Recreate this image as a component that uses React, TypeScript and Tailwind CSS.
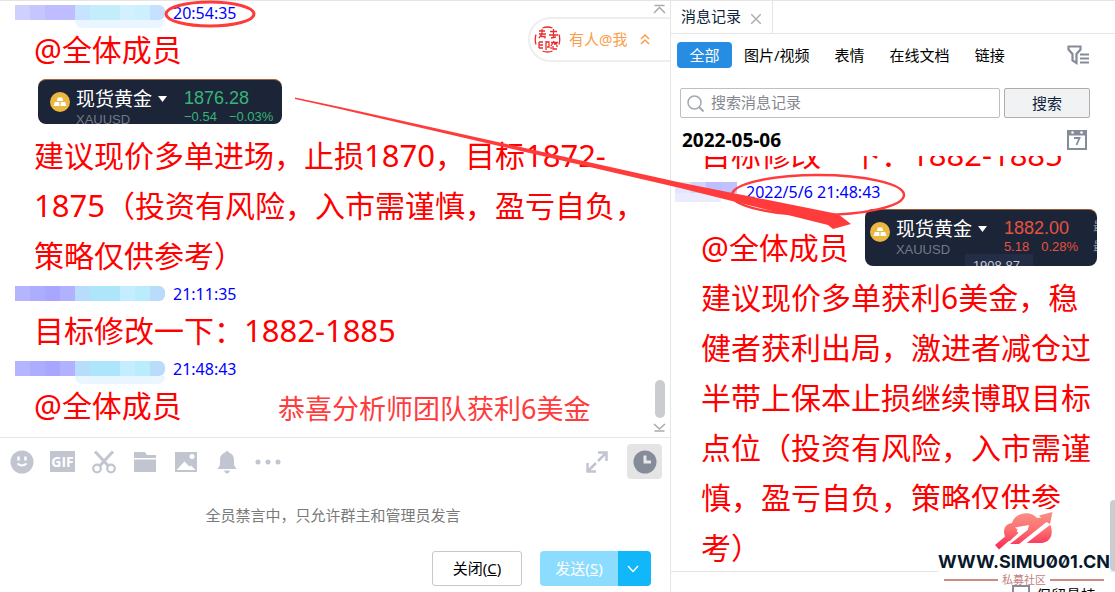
import React from "react";

function Coin() {
  return (
    <svg width="20" height="20" viewBox="0 0 20 20" className="shrink-0" aria-hidden="true">
      <circle cx="10" cy="10" r="10" fill="#ecb740" />
      <path d="M7.800 5.500h4.400l1 3.500H6.800zM4.800 10h4.400l.4 4H3.600zM10.800 10h4.400l1.200 4h-6z" fill="#fff" />
    </svg>
  );
}

type QuoteProps = { price: string; change: string; percent: string; wide?: boolean };

function Quote({ price, change, percent, wide }: QuoteProps) {
  return (
    <div
      className={
        wide
          ? "relative flex h-[57px] w-[232px] shrink-0 gap-[6px] overflow-hidden rounded-lg border-t border-[#9a5a35] bg-[#1c2437] pt-[6px] pl-[5px]"
          : "relative flex h-[45px] w-[244px] shrink-0 gap-[6px] overflow-hidden rounded-lg border-t border-[#b0622e] bg-[#1c2437] pt-[6px] pl-3"
      }
    >
      <div className="pt-[6px]">
        <Coin />
      </div>
      <div className="w-[102px]">
        <div className="flex items-center gap-[6px] text-[19px] leading-[26px] text-white">
          现货黄金
          <svg width="9" height="6" viewBox="0 0 9 6" aria-hidden="true">
            <path d="M0 0h9L4.500 6z" fill="#fff" />
          </svg>
        </div>
        <div className="font-['Liberation_Sans'] text-[13px] leading-4 text-[#727a88]">XAUUSD</div>
      </div>
      <div className={wide ? "font-['Liberation_Sans'] text-[#e5533f]" : "font-['Liberation_Sans'] text-[#35b579]"}>
        <div className="text-[18px] leading-6">{price}</div>
        <div className="flex gap-3 text-[13px] leading-[13px] whitespace-nowrap">
          <span>{change}</span>
          <span>{percent}</span>
        </div>
      </div>
      {wide && (
        <>
          <div className="absolute top-[44px] left-[100px] h-5 w-[68px] bg-[#232d45] pl-2 font-['Liberation_Sans'] text-[13px] leading-[24px] text-[#c3c8d2]">
            1908.87
          </div>
          <div className="absolute top-[7px] left-[228px] text-[12px] leading-[20px] whitespace-nowrap text-[#8d94a3]">
            最高
            <br />
            最低
          </div>
        </>
      )}
    </div>
  );
}

const mosaic = [
  "h-full flex-1 bg-[#b4b4ff]",
  "h-full flex-1 bg-[#adadff]",
  "h-full flex-1 bg-[#a7a7ff]",
  "h-full flex-1 bg-[#b1b1ff]",
  "h-full flex-1 bg-[#b8dcfb]",
  "h-full flex-1 bg-[#ade6fa]",
  "h-full flex-1 bg-[#ade6fa]",
  "h-full flex-1 bg-[#c4edff]",
  "h-full flex-1 bg-[#b9edfb]",
  "h-full flex-1 bg-[#b9dcfb]",
];

const paleMosaic = [
  "h-full flex-1 bg-[#d0d0ff]",
  "h-full flex-1 bg-[#c6c6ff]",
  "h-full flex-1 bg-[#bfbcff]",
  "h-full flex-1 bg-[#bfbcff]",
  "h-full flex-1 bg-[#c6e4ff]",
  "h-full flex-1 bg-[#c4edfb]",
  "h-full flex-1 bg-[#c4edfb]",
  "h-full flex-1 bg-[#d2f0ff]",
  "h-full flex-1 bg-[#cdf0ff]",
  "h-full flex-1 bg-[#c6e0ff]",
];

function Sender({ time, pale, soft }: { time: string; pale?: boolean; soft?: boolean }) {
  return (
    <div className="flex h-[25px] items-center gap-2 pl-[15px] text-[16px] text-[#0000ff]">
      <div className="w-[150px]">
        <div className="flex h-[15px] overflow-hidden rounded-r-md">
          {(pale ? paleMosaic : mosaic).map((c, i) => (
            <span key={i} className={c} />
          ))}
        </div>
        {soft && <div className="-mb-2 ml-[60px] h-2 rounded-b-lg bg-[#e9f6ff]" />}
      </div>
      <span>{time}</span>
    </div>
  );
}

function Num({ children }: { children: React.ReactNode }) {
  return <span className="text-[31px] leading-none">{children}</span>;
}

function Toolbar() {
  const btn = "flex h-8 w-[41px] items-center justify-center";
  return (
    <div className="flex items-center pt-[6px] pr-2 pl-px text-[#c1c5cf]">
      <button className={btn} aria-label="表情">
        <svg width="24" height="24" viewBox="0 0 24 24">
          <circle cx="12" cy="12" r="11.500" fill="currentColor" />
          <path d="M8.500 6.500v4M15.500 6.500v4" stroke="#fff" strokeWidth="2.500" />
          <path d="M7.500 13.500q4.500 4 9 0" stroke="#fff" strokeWidth="2" fill="none" />
        </svg>
      </button>
      <button className={btn} aria-label="动图">
        <span className="flex h-[21px] w-[25px] items-center justify-center bg-[#c1c5cf] font-['Open_Sans'] text-[14px] font-bold text-white">GIF</span>
      </button>
      <button className={btn} aria-label="截图">
        <svg width="24" height="24" viewBox="0 0 24 24" fill="none" stroke="currentColor">
          <circle cx="5" cy="18.500" r="3.800" strokeWidth="2.200" />
          <circle cx="19" cy="18.500" r="3.800" strokeWidth="2.200" />
          <path d="M3 1.500L16 15.500M21 1.500L8 15.500" strokeWidth="3" />
        </svg>
      </button>
      <button className={btn} aria-label="文件">
        <svg width="24" height="24" viewBox="0 0 24 24" fill="currentColor">
          <path d="M1 2h11l2 3h9v3H1zM1 9.500h22V22H1z" />
        </svg>
      </button>
      <button className={btn} aria-label="图片">
        <svg width="24" height="24" viewBox="0 0 24 24">
          <path d="M1 2h22v20H1z" fill="currentColor" />
          <path d="M2.500 20l8-8.500 5 5 1.500-1 4.500 4.500z" fill="#fff" />
          <circle cx="18" cy="6.500" r="2.500" fill="#fff" />
        </svg>
      </button>
      <button className={btn} aria-label="提醒">
        <svg width="24" height="24" viewBox="0 0 24 24" fill="currentColor">
          <path d="M12 .5l2 2c4 1.500 5 4.500 5 7.500v5l2.500 4h-19L5 15v-5c0-3 1-6 5-7.500zM9 20.500h6q-1 3-3 3t-3-3z" />
        </svg>
      </button>
      <button className={btn} aria-label="更多">
        <svg width="26" height="6" viewBox="0 0 26 6" fill="currentColor">
          <circle cx="3" cy="3" r="2.500" />
          <circle cx="13" cy="3" r="2.500" />
          <circle cx="23" cy="3" r="2.500" />
        </svg>
      </button>
      <button className="ml-auto" aria-label="展开">
        <svg width="22" height="22" viewBox="0 0 22 22" fill="none" stroke="currentColor" strokeWidth="2.500">
          <path d="M12 1.500h8.500V10M20 2l-8 8M1.500 12v8.500H10M2 20l8-8" />
        </svg>
      </button>
      <button className="ml-[19px] flex h-[35px] w-[35px] items-center justify-center rounded-sm bg-[#e4e4e4]" aria-label="消息记录">
        <svg width="24" height="24" viewBox="0 0 24 24">
          <circle cx="12" cy="12" r="11.500" fill="#858b99" />
          <path d="M12 5.500V12h6" stroke="#e8e8e8" strokeWidth="3" fill="none" />
        </svg>
      </button>
    </div>
  );
}

function Chat() {
  const big = "pl-[34px] text-[30px] leading-[50px] text-[#ff0000] whitespace-nowrap";
  return (
    <section className="flex min-h-0 min-w-0 flex-col">
      <div className="relative min-h-0 flex-1 overflow-hidden">
        <Sender time="20:54:35" pale soft />
        <p className={big}>
          <Num>@</Num>全体成员
        </p>
        <div className="pt-1 pb-[7px] pl-[38px]">
          <Quote price="1876.28" change="−0.54" percent="−0.03%" />
        </div>
        <p className={big}>
          建议现价多单进场，止损<Num>1870</Num>，目标<Num>1872-</Num>
          <br />
          <Num>1875</Num>（投资有风险，入市需谨慎，盈亏自负，
          <br />
          策略仅供参考）
        </p>
        <Sender time="21:11:35" />
        <p className={big}>
          目标修改一下：<Num>1882-1885</Num>
        </p>
        <Sender time="21:48:43" soft />
        <p className={big}>
          <Num>@</Num>全体成员
        </p>
        <p className="absolute bottom-2 left-[278px] text-[27px] leading-10 text-[#ff3b3b]">恭喜分析师团队获利6美金</p>
        <button className="absolute top-[17px] right-0 flex h-[45px] w-[142px] items-center gap-2 rounded-l-full border-2 border-r-0 border-[#eeeeee] bg-white pl-1 text-[15px] text-[#fb9d4b]">
          <svg width="27" height="27" viewBox="0 0 27 27" fill="none" stroke="#ea2c2c" strokeWidth="1.300" aria-hidden="true">
            <path d="M8.500 2q5-2 10 0M25 8.500q1.500 5 0 10M8.500 25q5 2 10 0M2 8.500q-1.500 5 0 10" />
            <path d="M5 5h6M5 8h7M8 3v5l-3 4M7 10.500h4v2M16 5.500h7M15 9h9M19.500 3v9.500M17 12l5-1M5 16v6M5 16h4M5 19h4M5 22h4M12 16h3v5h-2M12 15v9M17 16.500h7M20 15l-3 5M20 18h3M17 21v2M19 20v3h4M23 19v2" />
          </svg>
          <span className="pr-1">有人@我</span>
          <svg width="10" height="11" viewBox="0 0 10 11" fill="none" stroke="currentColor" strokeWidth="1.500" aria-hidden="true">
            <path d="M1 5l4-4 4 4M1 10l4-4 4 4" />
          </svg>
        </button>
        <svg className="absolute top-1 right-1 bg-white" width="13" height="10" viewBox="0 0 13 10" fill="none" stroke="#aaaaaa" strokeWidth="1.500" aria-hidden="true">
          <path d="M1.500 1.500h10M1 9l5.500-5.500L12 9" />
        </svg>
        <div className="absolute right-[5px] bottom-[19px] h-[38px] w-[10px] rounded-full bg-[#cbccd0]" />
        <svg className="absolute right-1 bottom-[5px]" width="13" height="9" viewBox="0 0 13 9" fill="none" stroke="#aaaaaa" strokeWidth="1.500" aria-hidden="true">
          <path d="M1 1l5.500 5L12 1M1.500 8h10" />
        </svg>
      </div>
      <div className="border-t border-[#e5e5e5] pb-[6px]">
        <Toolbar />
        <p className="pt-6 pr-1 text-center text-[15px] leading-6 text-[#7a7a7a]">全员禁言中，只允许群主和管理员发言</p>
        <div className="flex justify-end gap-[18px] pt-6 pr-[19px] text-[15px]">
          <button className="h-[35px] w-[90px] rounded-[3px] border border-[#c8c8c8] bg-white text-black">
            关闭(<u>C</u>)
          </button>
          <div className="flex overflow-hidden rounded-sm text-white">
            <button className="h-[35px] w-[78px] bg-[#8bdcff]">
              发送(<u>S</u>)
            </button>
            <button className="flex w-[33px] items-center justify-center bg-[#12b7f9] pr-1" aria-label="发送选项">
              <svg width="12" height="8" viewBox="0 0 12 8" fill="none" stroke="#fff" strokeWidth="1.300">
                <path d="M1 1l5 5.500L11 1" />
              </svg>
            </button>
          </div>
        </div>
      </div>
    </section>
  );
}

function Watermark() {
  return (
    <div className="absolute right-[5px] bottom-[7px] flex w-[172px] flex-col items-center bg-white pt-[2px]">
      <svg width="60" height="39" viewBox="0 0 60 39" aria-hidden="true">
        <defs>
          <linearGradient id="cloud" gradientUnits="userSpaceOnUse" x1="0" y1="2" x2="0" y2="36">
            <stop offset="0" stopColor="#f98f84" />
            <stop offset="0.500" stopColor="#fb6f70" />
            <stop offset="1" stopColor="#fd2f58" />
          </linearGradient>
        </defs>
        <path d="M13 28C8 23 9 13 18 12C21 1 37 -1 43 7C50 6 55 9 56 13C60 22 57 31 48 32H18z" fill="url(#cloud)" />
        <path d="M26 34L57 10" stroke="#fff" strokeWidth="5" />
        <path d="M13 36L30 20" stroke="#fff" strokeWidth="5" />
        <path d="M35 14L21 16.500L32 26z" fill="#fff" />
        <path d="M1 34L21 17L25 21L5 38.500z" fill="url(#cloud)" />
        <path d="M24 18.500L28 22.500" stroke="#fff" strokeWidth="4" />
        <path d="M16 33L48 7.500L45 4.500L58.500 1L56 13L52.500 11L25 33z" fill="url(#cloud)" />
      </svg>
      <div className="font-['Inter'] text-[18px] leading-6 font-bold whitespace-nowrap text-[#08192b] slashed-zero">WWW.SIMU001.CN</div>
      <div className="flex w-[160px] items-center gap-1 font-['Noto_Sans_CJK_SC'] text-[11px] leading-[11px] text-[#c5807c]">
        <span className="h-[2px] flex-1 bg-[#cf8a86]" />
        私募社区
        <span className="h-[2px] flex-1 bg-[#cf8a86]" />
      </div>
    </div>
  );
}

function History() {
  const big = "pl-[30px] text-[30px] leading-[50px] text-[#ff0000] whitespace-nowrap";
  return (
    <aside className="relative flex min-h-0 min-w-0 flex-col border-l border-[#e5e5e5]">
      <div className="flex h-[34px] shrink-0 border-b border-[#e5e5e5] text-[15px] text-[#10233b]">
        <div className="flex items-center gap-[10px] border-r border-[#e5e5e5] pr-[11px] pl-[10px]">
          消息记录
          <button className="pt-1" aria-label="关闭标签">
            <svg width="10" height="10" viewBox="0 0 10 10" stroke="#b0b0b0" strokeWidth="1.500">
              <path d="M0 0l10 10M10 0L0 10" />
            </svg>
          </button>
        </div>
      </div>
      <nav className="flex shrink-0 items-center gap-[25px] pt-2 pr-[25px] pl-[6px] text-[15px] text-black">
        <button className="-mr-[13px] h-[26px] w-[55px] rounded-sm bg-[#268de2] text-white">全部</button>
        <button>图片/视频</button>
        <button>表情</button>
        <button>在线文档</button>
        <button>链接</button>
        <button className="ml-auto" aria-label="筛选">
          <svg width="23" height="20" viewBox="0 0 23 20" fill="none" stroke="#858b99" strokeWidth="2.200">
            <path d="M1.500 1.500h12v3L9.500 9v9l-4-2.500V9l-4-4.500z" />
            <path d="M13 9.500h9M13 13.500h9M13 17.500h9" strokeWidth="2" />
          </svg>
        </button>
      </nav>
      <form className="flex shrink-0 gap-1 pt-5 pr-[25px] pl-[9px] text-[15px]" onSubmit={(e) => e.preventDefault()}>
        <label className="flex h-[30px] min-w-0 flex-1 items-center gap-[7px] rounded-[2px] border border-[#bfbfbf] px-[6px]">
          <svg width="17" height="17" viewBox="0 0 17 17" fill="none" stroke="#a5a8ae" strokeWidth="1.500" aria-hidden="true">
            <circle cx="7.500" cy="7.500" r="6.500" />
            <path d="M12 12l4.500 4.500" strokeWidth="2" />
          </svg>
          <input className="min-w-0 flex-1 bg-transparent pb-[2px] outline-none placeholder:text-[#85888e]" placeholder="搜索消息记录" aria-label="搜索消息记录" />
        </label>
        <button className="w-[86px] rounded-[2px] border border-[#adadad] bg-[#f1f2f4] text-[#10233b]">搜索</button>
      </form>
      <div className="flex h-[38px] shrink-0 items-center justify-between pt-[6px] pr-7 pl-[11px] text-[19px] font-bold text-black">
        2022-05-06
        <button aria-label="选择日期">
          <svg width="20" height="20" viewBox="0 0 20 20">
            <path d="M0 0h20v20H0z" fill="#858b99" />
            <path d="M2 5.500h16V18H2z" fill="#fff" />
            <circle cx="5.500" cy="2.500" r="1.300" fill="#fff" />
            <circle cx="14.500" cy="2.500" r="1.300" fill="#fff" />
            <path d="M7 8h5.500l-3 7" stroke="#858b99" strokeWidth="1.800" fill="none" />
          </svg>
        </button>
      </div>
      <div className="min-h-0 flex-1 overflow-hidden">
        <p className={"-mt-[26px] " + big}>
          目标修改一下：<Num>1882-1885</Num>
        </p>
        <div className="flex h-6 items-center gap-[9px] pl-1 text-[16px] text-[#0000ff]">
          <div className="w-[62px]">
            <div className="flex h-[11px]">
              <span className="flex-1 bg-[#e4e4ff]" />
              <span className="flex-1 bg-[#d2d2ff]" />
              <span className="flex-1 bg-[#bebeff]" />
              <span className="flex-1 bg-[#c1c1ff]" />
            </div>
            <div className="h-[9px] w-[46px] bg-[#ebebff]" />
          </div>
          2022/5/6 21:48:43
        </div>
        <div className={"flex h-[69px] items-start gap-4 pt-[5px] " + big}>
          <span className="pt-[14px]">
            <Num>@</Num>全体成员
          </span>
          <Quote price="1882.00" change="5.18" percent="0.28%" wide />
        </div>
        <p className={big}>
          建议现价多单获利6美金，稳
          <br />
          健者获利出局，激进者减仓过
          <br />
          半带上保本止损继续博取目标
          <br />
          点位（投资有风险，入市需谨
          <br />
          慎，盈亏自负，策略仅供参
          <br />
          考）
        </p>
      </div>
      <label className="flex h-[21px] shrink-0 items-start justify-end gap-[6px] overflow-hidden border-t border-[#e5e5e5] pt-[13px] pr-[19px] text-[15px] leading-5 text-black">
        <input type="checkbox" className="h-[18px] w-[18px] appearance-none border-2 border-[#858b99]" />
        保留悬挂
      </label>
      <div className="absolute right-0 bottom-[21px] h-[71px] w-[5px] rounded-l-sm bg-[#cbccd0]" />
      <Watermark />
    </aside>
  );
}

export default function App() {
  return (
    <main className="relative grid h-screen grid-cols-[670fr_445fr] grid-rows-[minmax(0,1fr)] overflow-hidden bg-white font-['Noto_Sans','Noto_Sans_CJK_SC',sans-serif] shadow-[inset_0_1px_0_#e5e5e5]">
      <Chat />
      <History />
      <svg className="pointer-events-none absolute top-0 left-0" width="1115" height="592" viewBox="0 0 1115 592" fill="none" aria-hidden="true">
        <ellipse cx="210" cy="14" rx="44" ry="12" stroke="#ff3b3b" strokeWidth="3" />
        <ellipse cx="818" cy="195" rx="86" ry="20" stroke="#ff3b3b" strokeWidth="2.500" />
        <path d="M295 97.500L340 107L680 182.500L838 214L851 224L833 229L828 225L680 188L340 109L295 99z" fill="#ff3b3b" />
      </svg>
    </main>
  );
}
